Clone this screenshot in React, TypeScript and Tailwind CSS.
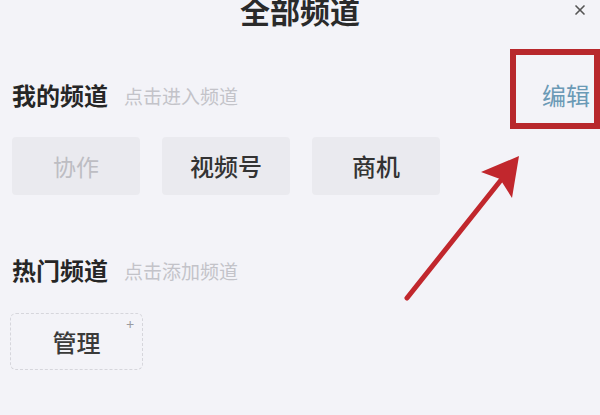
import { X } from "lucide-react";

type Chip = {
  label: string;
  muted?: boolean;
};

const myChannels: Chip[] = [
  { label: "协作", muted: true },
  { label: "视频号" },
  { label: "商机" },
];

function SectionHeader({ title, hint, action }: { title: string; hint: string; action?: string }) {
  return (
    <div className="flex h-[30px] items-center px-[12px]">
      <span className="text-[24px] font-bold leading-none text-[#262626]">{title}</span>
      <span className="ml-[16px] text-[19px] leading-none text-[#c3c3c9]">{hint}</span>
      {action && (
        <span className="-mr-[2px] ml-auto text-[24px] leading-none text-[#6b9ab6]">{action}</span>
      )}
    </div>
  );
}

export default function App() {
  return (
    <div
      className="relative h-[415px] w-[600px] overflow-hidden bg-[#f3f3f8]"
      style={{ fontFamily: '"Noto Sans CJK SC", "Noto Sans", sans-serif' }}
    >
      <header className="relative flex h-[25px] justify-center">
        <h1 className="-mt-[5px] text-[30px] font-bold leading-none text-[#2a2a2a]">全部频道</h1>
        <button type="button" className="absolute right-[12px] top-[2px] text-[#555]">
          <X size={16} strokeWidth={2.5} aria-hidden="true" />
        </button>
      </header>

      <div className="mt-[55px]">
        <SectionHeader title="我的频道" hint="点击进入频道" action="编辑" />
      </div>

      <div className="mt-[27px] flex gap-[22px] px-[12px]">
        {myChannels.map((chip) => (
          <div
            key={chip.label}
            className="flex h-[58px] w-[128px] items-center justify-center rounded-[4px] bg-[#eaeaef]"
          >
            <span
              className={
                chip.muted
                  ? "text-[23px] leading-none text-[#bdbdc3]"
                  : "text-[24px] font-medium leading-none text-[#333]"
              }
            >
              {chip.label}
            </span>
          </div>
        ))}
      </div>

      <div className="mt-[60px]">
        <SectionHeader title="热门频道" hint="点击添加频道" />
      </div>

      <div className="mt-[28px] px-[10px]">
        <div className="relative flex h-[57px] w-[133px] items-center justify-center rounded-[6px] border-[1.5px] border-dashed border-[#d6d6dc]">
          <span className="text-[24px] font-medium leading-none text-[#3a3a3a]">管理</span>
          <span className="absolute right-[8px] top-[3px] text-[14px] leading-none text-[#9a9aa0]">+</span>
        </div>
      </div>

      {/* annotation overlay */}
      <div className="absolute left-[510px] top-[49px] h-[80px] w-[90px] border-[6px] border-[#b8282c]" />
      <svg className="absolute left-0 top-0" width="600" height="415" viewBox="0 0 600 415" aria-hidden="true">
        <line x1="407" y1="298" x2="505" y2="175" stroke="#c1272d" strokeWidth="5" strokeLinecap="round" />
        <polygon points="519,156 481,172 500,179 512,198" fill="#c1272d" />
      </svg>
    </div>
  );
}
